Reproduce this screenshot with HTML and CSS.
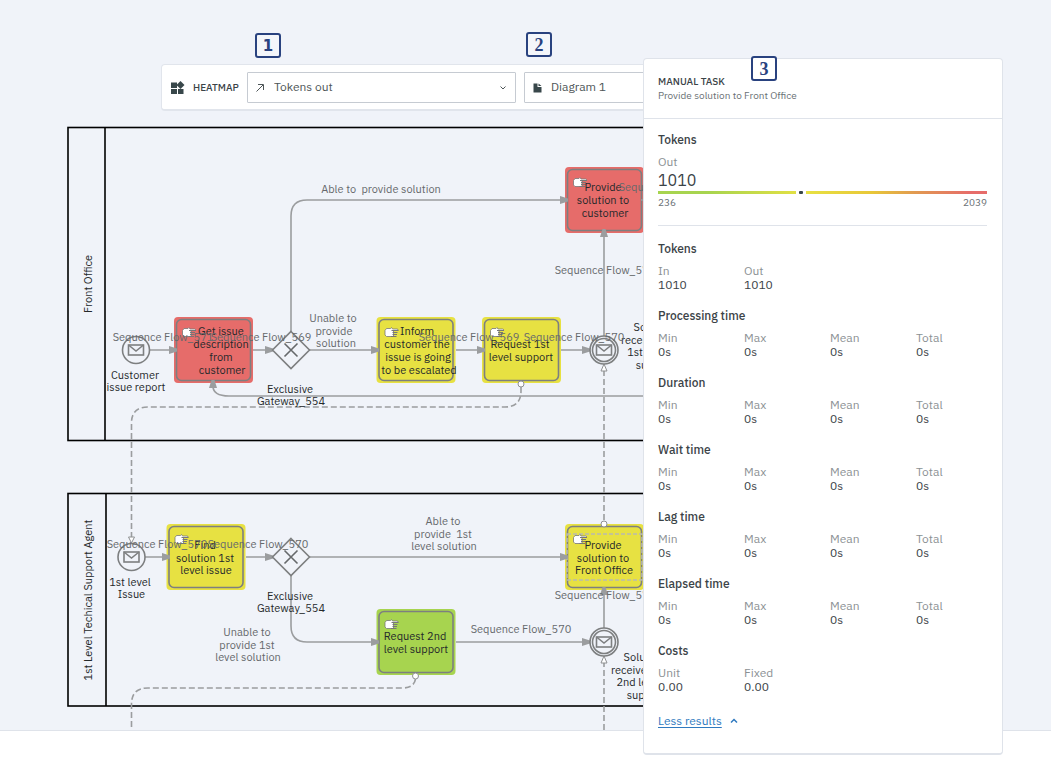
FILE: index.html
```html
<!DOCTYPE html>
<html lang="en">
<head>
<meta charset="utf-8">
<title>Simulation heatmap</title>
<link rel="stylesheet" href="styles.css">
</head>
<body>
<main class="stage">
  <svg class="diagram" role="img" aria-label="Process diagram">
    <defs>
      <g id="hand">
        <path d="M.5 3.5 2 1.5H6L7 .5 8 2H12.500Q14 2 13.500 3.500H9V9.500H2L.5 8Z" fill="#fff" stroke="#777" stroke-width=".8"/>
        <path d="M7 3.500H14M8 5.500H13M8 7.500H12.500M6.500 9.500H12" fill="none" stroke="#777" stroke-width="1"/>
      </g>
      <g id="mail">
        <rect x="-7.500" y="-5" width="15" height="10"/>
        <path d="M-7.500-5 0 1 7.500-5"/>
      </g>
      <g id="start"><circle r="13.500"/><use href="#mail"/></g>
      <g id="catch"><circle r="14"/><circle r="11.500"/><use href="#mail"/></g>
      <g id="gateway"><path d="M0-18.500 18.500 0 0 18.500-18.500 0Z"/><path class="cross" d="M-6.500-6.500 6.500 6.500M6.500-6.500-6.500 6.500"/></g>
      <g id="task"><rect class="halo" width="79" height="66" rx="4"/><rect class="box" x="2.500" y="2.500" width="74" height="61" rx="5"/></g>
      <path id="head" d="M-8-4 0-1.500V1.500L-8 4Z"/>
    </defs>

    <g class="pool">
      <rect x="68" y="127.500" width="900" height="313"/>
      <path d="M105 127.500V440.500"/>
      <rect x="68" y="493.500" width="900" height="212.500"/>
      <path d="M106 493.500V706"/>
    </g>

    <g>
      <use class="hot" href="#task" x="174" y="317"/>
      <use class="warm" href="#task" x="376.500" y="317"/>
      <use class="warm" href="#task" x="482" y="317"/>
      <use class="hot" href="#task" x="565" y="167"/>
      <use class="warm" href="#task" x="166.500" y="524"/>
      <use class="warm" href="#task" x="565" y="524"/>
      <use class="cool" href="#task" x="376.500" y="609"/>
    </g>

    <g class="flow">
      <path d="M149.500 350H170M253 350H270M309 350H372M456 350H478M561 350H584"/>
      <path d="M291 332V216Q291 200 307 200H562"/>
      <path d="M604 336V236M604 628V594"/>
      <path d="M700 396H229Q213 396 213 386"/>
      <path d="M145 557H162M246 557H270M309 557H562"/>
      <path d="M291 575V626Q291 642 307 642H374M456 642H584M641 200H660"/>
    </g>
    <g class="message">
      <path d="M521 387V391Q521 407 505 407H148Q131.500 407 131.500 423V537"/>
      <path d="M415.500 679Q414 688 402 688H148Q131.500 688 131.500 704V730"/>
      <path d="M604 520V371M604 730V663"/>
      <rect class="selection" x="567" y="534" width="75" height="46"/>
    </g>
    <g class="heads">
      <use href="#head" x="177" y="350"/><use href="#head" x="273" y="350"/><use href="#head" x="379" y="350"/>
      <use href="#head" x="485" y="350"/><use href="#head" x="590" y="350"/><use href="#head" x="568" y="200"/>
      <use href="#head" x="170" y="557"/><use href="#head" x="273" y="557"/><use href="#head" x="568" y="557"/>
      <use href="#head" x="379" y="642"/><use href="#head" x="590" y="642"/>
      <use href="#head" transform="translate(604 229) rotate(-90)"/>
      <use href="#head" transform="translate(604 587) rotate(-90)"/>
      <use href="#head" transform="translate(213 380) rotate(-90)"/>
    </g>
    <g class="ends">
      <circle cx="521" cy="384" r="3"/><circle cx="415.500" cy="676" r="3"/><circle cx="604" cy="524" r="3"/>
      <path d="M601 371H607L604 364ZM601 663H607L604 656ZM128.500 537H134.500L131.500 543Z"/>
    </g>
    <g class="node">
      <use href="#start" x="136" y="350"/><use href="#start" x="131.500" y="557"/>
      <use href="#catch" x="604" y="350"/><use href="#catch" x="604" y="642"/>
      <use href="#gateway" x="291" y="350"/><use href="#gateway" x="291" y="557"/>
    </g>
    <g>
      <use href="#hand" x="182" y="327"/><use href="#hand" x="384.500" y="327"/><use href="#hand" x="490" y="327"/>
      <use href="#hand" x="573" y="177"/><use href="#hand" x="174.500" y="534"/><use href="#hand" x="573" y="534"/>
      <use href="#hand" x="384.500" y="619"/>
    </g>

    <g class="name">
      <text transform="translate(92 284) rotate(-90)">Front Office</text>
      <text transform="translate(92 600) rotate(-90)">1st Level Techical Support Agent</text>
      <text x="135" y="379">Customer<tspan x="136" y="391">issue report</tspan></text>
      <text x="290" y="393">Exclusive<tspan x="291" y="405">Gateway_554</tspan></text>
      <text x="130" y="586">1st level<tspan x="131.500" y="598">Issue</tspan></text>
      <text x="290" y="600">Exclusive<tspan x="291" y="612">Gateway_554</tspan></text>
      <text x="221" y="335">Get issue<tspan x="221" y="348">description</tspan><tspan x="221" y="361">from</tspan><tspan x="222" y="374">customer</tspan></text>
      <text x="417" y="335">Inform<tspan x="417" y="348">customer the</tspan><tspan x="418" y="361">issue is going</tspan><tspan x="419" y="374">to be escalated</tspan></text>
      <text x="520" y="348">Request 1st<tspan x="521" y="361">level support</tspan></text>
      <text x="603" y="191">Provide<tspan x="603" y="204">solution to</tspan><tspan x="605" y="217">customer</tspan></text>
      <text x="205" y="549">Find<tspan x="205" y="562">solution 1st</tspan><tspan x="206" y="574">level issue</tspan></text>
      <text x="603" y="549">Provide<tspan x="603" y="562">solution to</tspan><tspan x="604" y="574">Front Office</tspan></text>
      <text x="415" y="640">Request 2nd<tspan x="416" y="653">level support</tspan></text>
      <text x="654" y="331">Solution<tspan x="655" y="344">received from</tspan><tspan x="648" y="356">1st level</tspan><tspan x="655" y="369">support</tspan></text>
      <text x="644" y="661">Solution<tspan x="645" y="674">received from</tspan><tspan x="639" y="686">2nd level</tspan><tspan x="646" y="699">support</tspan></text>
    </g>
    <g class="caption">
      <text x="381" y="193">Able to&#160; provide solution</text>
      <text x="333" y="322">Unable to<tspan x="334" y="335">provide</tspan><tspan x="336" y="347">solution</tspan></text>
      <text x="163" y="341">Sequence Flow_571</text>
      <text x="261" y="341">Sequence Flow_569</text>
      <text x="469" y="341">Sequence Flow_569</text>
      <text x="574" y="341">Sequence Flow_570</text>
      <text x="669" y="191">Sequence Flow_570</text>
      <text x="605" y="274">Sequence Flow_570</text>
      <text x="157" y="548">Sequence Flow_570</text>
      <text x="258" y="548">Sequence Flow_570</text>
      <text x="443" y="525">Able to<tspan x="443" y="538">provide&#160; 1st</tspan><tspan x="444" y="550">level solution</tspan></text>
      <text x="605" y="599">Sequence Flow_570</text>
      <text x="247" y="636">Unable to<tspan x="247" y="649">provide 1st</tspan><tspan x="248" y="661">level solution</tspan></text>
      <text x="521" y="633">Sequence Flow_570</text>
    </g>
  </svg>

  <form class="toolbar">
    <label class="mode" for="metric">
      <svg class="tiles" width="14" height="14" viewBox="0 0 14 14" aria-hidden="true"><path d="M0 1.500H6V7H0ZM0 8H6V13H0ZM7 8H12.500V13H7ZM9.500 0 13.500 4 9.500 8 5.500 4Z"/></svg>
      HEATMAP
    </label>
    <span class="field metric">
      <svg class="lead" width="14" height="14" viewBox="0 0 14 14" aria-hidden="true"><path d="M2.500 10.500 9 4M4 3.500H9.500V9"/></svg>
      <select id="metric"><option>Tokens out</option></select>
      <svg class="caret" width="8" height="6" viewBox="0 0 8 6" aria-hidden="true"><path d="M1.500 1.500 4 4 6.500 1.500"/></svg>
    </span>
    <span class="field chart">
      <svg class="page" width="14" height="14" viewBox="0 0 14 14" aria-hidden="true"><path d="M2.500 2.500H6.500V6H10.500V11.500H2.500ZM7.500 2.500 10.500 5H7.500Z"/></svg>
      <select aria-label="Diagram"><option>Diagram 1</option></select>
    </span>
  </form>

  <aside class="panel">
    <header class="head">
      <h1>MANUAL TASK</h1>
      <p>Provide solution to Front Office</p>
    </header>
    <section class="summary">
      <h2>Tokens</h2>
      <p class="key">Out</p>
      <p class="total">1010</p>
      <div class="scale"><span class="mark" style="left:43%"></span></div>
      <div class="limits"><span>236</span><span>2039</span></div>
    </section>
    <div class="groups">
      <section><h2>Tokens</h2><dl><div><dt>In</dt><dd>1010</dd></div><div><dt>Out</dt><dd>1010</dd></div></dl></section>
      <section><h2>Processing time</h2><dl><div><dt>Min</dt><dd>0s</dd></div><div><dt>Max</dt><dd>0s</dd></div><div><dt>Mean</dt><dd>0s</dd></div><div><dt>Total</dt><dd>0s</dd></div></dl></section>
      <section><h2>Duration</h2><dl><div><dt>Min</dt><dd>0s</dd></div><div><dt>Max</dt><dd>0s</dd></div><div><dt>Mean</dt><dd>0s</dd></div><div><dt>Total</dt><dd>0s</dd></div></dl></section>
      <section><h2>Wait time</h2><dl><div><dt>Min</dt><dd>0s</dd></div><div><dt>Max</dt><dd>0s</dd></div><div><dt>Mean</dt><dd>0s</dd></div><div><dt>Total</dt><dd>0s</dd></div></dl></section>
      <section><h2>Lag time</h2><dl><div><dt>Min</dt><dd>0s</dd></div><div><dt>Max</dt><dd>0s</dd></div><div><dt>Mean</dt><dd>0s</dd></div><div><dt>Total</dt><dd>0s</dd></div></dl></section>
      <section><h2>Elapsed time</h2><dl><div><dt>Min</dt><dd>0s</dd></div><div><dt>Max</dt><dd>0s</dd></div><div><dt>Mean</dt><dd>0s</dd></div><div><dt>Total</dt><dd>0s</dd></div></dl></section>
      <section><h2>Costs</h2><dl><div><dt>Unit</dt><dd>0.00</dd></div><div><dt>Fixed</dt><dd>0.00</dd></div></dl></section>
    </div>
    <p class="more"><a href="#">Less results</a><svg width="8" height="6" viewBox="0 0 8 6" aria-hidden="true"><path d="M1 4.500 4 1.500 7 4.500"/></svg></p>
  </aside>

  <span class="badge one">1</span>
  <span class="badge two">2</span>
  <span class="badge three">3</span>
</main>
</body>
</html>
```
FILE: styles.css
```css
* { box-sizing: border-box; }
body {
  min-height: 100vh;
  margin: 0;
  background: #fff;
  color: #3b4347;
  font-family: "IBM Plex Sans", Roboto, sans-serif;
}
h1, h2, p, dl, dd { margin: 0; }

.stage {
  position: relative;
  display: grid;
  background: #f0f3f9;
  border-bottom: 1px solid #dfe3ea;
}
.diagram, .toolbar { grid-area: 1 / 1; }
.diagram { width: 100%; height: 730px; }

/* Process diagram */
.pool { fill: none; stroke: #000; stroke-width: 1.6; }
.halo { fill: currentColor; }
.box { fill: none; stroke: #7d7f80; stroke-width: 1.6; }
.hot { color: #e66c6a; }
.warm { color: #e7e142; }
.cool { color: #a7d44f; }
.flow { fill: none; stroke: #9b9d9f; stroke-width: 1.6; }
.message { fill: none; stroke: #9b9d9f; stroke-width: 1.6; stroke-dasharray: 6 3; }
.selection { stroke: #b9bab0; stroke-dasharray: 4 2; }
.heads { fill: #9b9d9f; }
.ends { fill: #fff; stroke: #8e9092; stroke-width: 1; }
.node { fill: none; stroke: #7d7f80; stroke-width: 1.6; }
.cross { stroke: #66696b; }
.name, .caption { font-size: 11px; text-anchor: middle; }
.name { fill: #25292b; }
.caption { fill: #66696c; }

/* Toolbar */
.toolbar {
  align-self: start;
  display: flex;
  align-items: center;
  gap: 8px;
  margin: 64px 60px 0 161px;
  padding: 7px 8px 6px 9px;
  background: #fff;
  border: 1px solid #e1e5ec;
  border-bottom-width: 2px;
  border-radius: 4px;
}
.mode {
  display: flex;
  align-items: center;
  gap: 8px;
  width: 68px;
  font-size: 10px;
  font-weight: 500;
  white-space: nowrap;
}
.tiles { flex: none; fill: #38474a; }
.field {
  display: flex;
  align-items: center;
  height: 31px;
  padding: 0 8px 0 6px;
  border: 1px solid #c6cbd2;
  border-radius: 1px;
}
.metric { width: 269px; }
.chart { flex: 1; }
.field select {
  flex: 1;
  min-width: 0;
  padding: 0 0 2px 6px;
  border: 0;
  background: none;
  appearance: none;
  color: #4e5658;
  font: inherit;
  font-size: 12px;
}
.lead, .caret { fill: none; stroke: #4e5658; stroke-width: 1; }
.page { fill: #38474a; }

/* Result panel */
.panel {
  position: absolute;
  top: 58px;
  right: 48px;
  width: 360px;
  padding-bottom: 23px;
  background: #fff;
  border: 1px solid #dfe3ea;
  border-bottom-width: 2px;
  border-radius: 4px;
  font-size: 12px;
}
.head { padding: 16px 14px; border-bottom: 1px solid #dfe3ea; }
.head h1 { font-size: 10px; font-weight: 500; line-height: 14px; }
.head p { font-size: 10px; line-height: 13px; color: #6a7175; }
.panel h2 { font-size: 12px; font-weight: 500; line-height: 18px; }
.summary {
  margin: 0 15px 0 14px;
  padding: 12px 0 15px;
  border-bottom: 1px solid #dfe3ea;
}
.key { margin-top: 6px; line-height: 14px; color: #8c9194; }
.total { font-size: 16px; line-height: 22px; }
.scale {
  position: relative;
  height: 3px;
  background: linear-gradient(90deg, #a7d44f 15%, #e7e142 45%, #e8c738 65%, #e19a50 78%, #e66c6a 95%);
}
.mark {
  position: absolute;
  display: grid;
  place-items: center;
  width: 10px;
  height: 3px;
  margin-left: -3px;
  background: #fff;
}
.mark::after {
  content: "";
  width: 4px;
  height: 3px;
  border-radius: 1px;
  background: #38474a;
}
.limits {
  display: flex;
  justify-content: space-between;
  padding-top: 2px;
  font-size: 10px;
  line-height: 14px;
  color: #6a7175;
}
.groups { display: grid; gap: 15px; padding: 14px 16px 0 14px; }
.groups dl {
  display: grid;
  grid-template-columns: repeat(4, 1fr);
  gap: 16px;
  margin-top: 6px;
  line-height: 14px;
}
dt { color: #8c9194; }
.more {
  display: flex;
  align-items: center;
  gap: 8px;
  margin: 18px 14px 0;
  line-height: 18px;
}
.more a { color: #2f7ac0; text-underline-offset: 2px; }
.more svg { fill: none; stroke: #2f7ac0; stroke-width: 1.5; }

/* Numbered callouts */
.badge {
  position: absolute;
  display: grid;
  place-items: center;
  width: 26px;
  height: 25px;
  border: 2px solid #29427f;
  border-radius: 3px;
  background: #f4f6fa;
  color: #29427f;
  font-size: 16px;
  line-height: 20px;
}
.one { top: 33px; left: 255px; font-family: "DejaVu Sans", sans-serif; font-weight: 700; font-size: 15px; }
.two { top: 32px; left: 526px; font-family: "Liberation Serif", serif; font-weight: 700; font-size: 18px; }
.three { top: 56px; right: 274px; background: #fff; font-family: "Liberation Serif", serif; font-weight: 700; font-size: 18px; }
```
